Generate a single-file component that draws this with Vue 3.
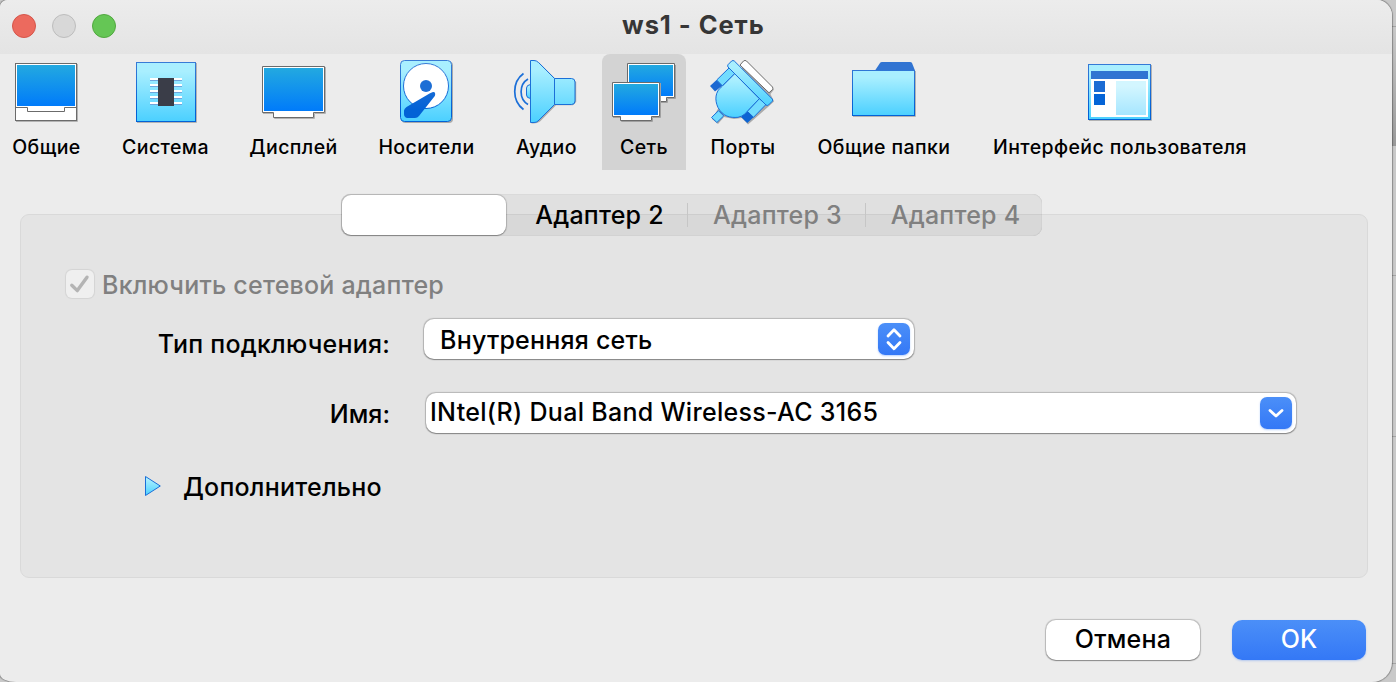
<script setup>
import { ref } from 'vue'

const tools = [
  { id: 'general', label: 'Общие', left: 10, size: 73 },
  { id: 'system', label: 'Система', left: 129, size: 73 },
  { id: 'display', label: 'Дисплей', left: 257, size: 73 },
  { id: 'storage', label: 'Носители', left: 390, size: 73 },
  { id: 'audio', label: 'Аудио', left: 510, size: 73 },
  { id: 'network', label: 'Сеть', left: 607, size: 74 },
  { id: 'ports', label: 'Порты', left: 706, size: 74 },
  { id: 'folders', label: 'Общие папки', left: 847, size: 74 },
  { id: 'interface', label: 'Интерфейс пользователя', left: 1083, size: 74 },
]
const active = ref('network')
const tabs = [
  { label: 'Адаптер 2', off: false },
  { label: 'Адаптер 3', off: true },
  { label: 'Адаптер 4', off: true },
]
</script>

<template>
  <div class="desktop">
    <svg class="defs" width="0" height="0">
      <defs>
        <linearGradient id="screen" x1="0" y1="0" x2="0" y2="1">
          <stop offset="0" stop-color="#23a9e0" /><stop offset="1" stop-color="#007bfa" />
        </linearGradient>
        <linearGradient id="sky" x1="0" y1="0" x2="0" y2="1">
          <stop offset="0.15" stop-color="#a9efff" /><stop offset="1" stop-color="#4bd0ff" />
        </linearGradient>
        <linearGradient id="pane" x1="0" y1="0" x2="0" y2="1">
          <stop offset="0.15" stop-color="#d3f6ff" /><stop offset="1" stop-color="#a6e6ff" />
        </linearGradient>
        <linearGradient id="deep" x1="0" y1="60" x2="0" y2="122" gradientUnits="userSpaceOnUse">
          <stop offset="0" stop-color="#3a7cd6" /><stop offset="0.8" stop-color="#0262d6" />
        </linearGradient>
      </defs>
    </svg>
    <div class="window">
      <header class="titlebar">
        <i class="light light--close"></i><i class="light light--min"></i><i class="light light--max"></i>
        <h1 class="title">ws1 - Сеть</h1>
      </header>

      <nav class="toolbar">
        <button v-for="tool in tools" :key="tool.id" class="tool" :class="['tool--' + tool.id, { 'tool--active': tool.id === active }]" @click="active = tool.id">
          <svg class="tool-icon" :width="tool.size" height="68" :viewBox="`${tool.left} 58 ${tool.size} 68`">
            <template v-if="tool.id === 'general'">
              <path d="M16 121.5H77.5V64" fill="none" stroke="#b3b3b3" />
              <rect x="15.5" y="63.5" width="61" height="57" fill="#fff" stroke="#6b6b6b" />
              <rect x="17" y="65" width="58" height="41" fill="url(#screen)" />
              <path d="M15.5 107.5H27.5V111.5H64.5V107.5H76" fill="none" stroke="#6b6b6b" />
            </template>
            <template v-else-if="tool.id === 'system'">
              <path d="M137 122.5H196.5V63" fill="none" stroke="#b3b3b3" />
              <rect x="136.5" y="62.5" width="59" height="59" fill="url(#sky)" stroke="url(#deep)" />
              <path d="M150 80.5H182M150 86.5H182M150 92.5H182M150 98.5H182M150 104.5H182" stroke="#6fa5dc" />
              <path d="M150 79H182M150 85H182M150 91H182M150 97H182M150 103H182" stroke="#fff" stroke-width="2" />
              <rect x="158" y="78" width="16" height="28" fill="#3a3d48" />
            </template>
            <template v-else-if="tool.id === 'display'">
              <path d="M263 113.5H274.5V118.5H314.5V113.5H325.5V67" fill="none" stroke="#b3b3b3" />
              <path d="M262.5 66.5H324.5V112.5H313.5V117.5H273.5V112.5H262.5Z" fill="#fff" stroke="#6b6b6b" />
              <rect x="264" y="68" width="59" height="43" fill="url(#screen)" />
            </template>
            <template v-else-if="tool.id === 'storage'">
              <rect x="401.5" y="61.5" width="51.5" height="61.5" rx="4" fill="#aaa" />
              <rect x="400.5" y="60.5" width="51" height="61" rx="4" fill="url(#sky)" stroke="url(#deep)" />
              <circle cx="426" cy="86" r="22.5" fill="#fff" stroke="url(#deep)" />
              <circle cx="426" cy="86" r="6" fill="#1c6ed5" />
              <path d="M433 92C435 91.6 435.8 93.5 434.8 96L419 116Q417.5 118 415 118H407Q404 117 404 114V110.5Q404.3 108.5 406.5 107L430 93.2Z" fill="url(#deep)" />
            </template>
            <template v-else-if="tool.id === 'audio'">
              <path d="M531 62L539 62.5L556 79.3H573L576.2 82V102L573 105.3H556L540 121.5Q537 124 531.5 123.5Z" fill="#aaa" />
              <path d="M530.5 84.5Q526.5 85 526.5 88V95Q526.5 98 530.5 98.5Z" fill="url(#sky)" stroke="#1b6fd8" />
              <path d="M530.5 60.5H534Q536.5 60.5 538.5 62.5L554.5 78.5H571.5Q575 78.5 575 82V101Q575 104.5 571.5 104.5H554.5L538 121Q536.5 122.5 534 122.5H530.5ZM554.5 78.5V104.5" fill="url(#sky)" stroke="#1b6fd8" />
              <path d="M523.5 73.5C511.8 82 511.8 101 523.5 109.5M528 79C518.8 84.5 518.8 99 528 104.5" fill="none" stroke="#1b6fd8" stroke-width="1.7" />
            </template>
            <template v-else-if="tool.id === 'network'">
              <path d="M628 98.5H638V102.5H667.5V98.5H675.5V65" fill="none" stroke="#a0a0a0" />
              <path d="M627.5 63.5H674.5V97.5H666.5V101.5H636.5V97.5H627.5Z" fill="#fff" stroke="#6b6b6b" />
              <rect x="629" y="65" width="44" height="31" fill="url(#screen)" />
              <path d="M613 117.5H621.5V121.5H652.5V117.5H660.5V83" fill="none" stroke="#a0a0a0" />
              <path d="M612.5 82.5H659.5V116.5H651.5V120.5H620.5V116.5H612.5Z" fill="#fff" stroke="#6b6b6b" />
              <rect x="614" y="84" width="44" height="31" fill="url(#screen)" />
            </template>
            <template v-else-if="tool.id === 'ports'">
              <path d="M746 61L774 89.5L770.5 94L774 101.5L768 107L748 124.5L742 118L734 119L724 117L718 124L712 119" fill="#aaa" />
              <path d="M740 65L743.5 61Q745 59.8 746.5 61L772.5 87Q773.3 88.3 772.5 89.5L769 92.8Z" fill="#fff" stroke="#6b6b6b" />
              <path d="M716.5 80L710 86L715 91.5L722.5 85.5Z" fill="#1b68d2" />
              <path d="M729 68L716.7 80L722.3 85.7L734.7 73.7ZM759.3 98.7L766 104.5L753.5 117.3L747.3 111.3ZM718.5 110.7L723.7 115.9L716.9 122.5L711.5 117.5Z" fill="#72dcff" stroke="#1b6fd8" />
              <path d="M747.3 111.3L741 117L747.3 123L753.5 117.3Z" fill="#0c64d3" />
              <path d="M734.7 73.7L722 86.5C715 91.5 714.5 100 718 107.5C723 116.5 730 118 738 117.3C743 116.5 746.5 112.5 748 110.5L759.3 98.7Z" fill="url(#sky)" stroke="#1b6fd8" />
              <path d="M731.6 61L728 64.7Q727.3 66 728 67L766 105Q767.3 106 768.5 105L772.3 101.2Q773.2 100 772.3 99L734.3 61Q733 60 731.6 61Z" fill="url(#sky)" stroke="#1b6fd8" />
            </template>
            <template v-else-if="tool.id === 'folders'">
              <path d="M853 116.5H915.5V71" fill="none" stroke="#b3b3b3" />
              <path d="M875 70.5L880 63Q880.5 62 882 62H910Q911.5 62 912 63L915 70.5Z" fill="#3174d2" />
              <rect x="852.5" y="70.5" width="62" height="45" fill="url(#sky)" stroke="url(#deep)" />
            </template>
            <template v-else>
              <path d="M1089 120.5H1151.5V65" fill="none" stroke="#b3b3b3" />
              <rect x="1088.5" y="64.5" width="62" height="55" fill="url(#sky)" stroke="url(#deep)" />
              <rect x="1091" y="71" width="57" height="8" fill="#3074d2" />
              <rect x="1091" y="79" width="57" height="38" fill="#fff" />
              <rect x="1094" y="81" width="11" height="11" fill="#1b6cd4" />
              <rect x="1094" y="94" width="11" height="11" fill="#0464d7" />
              <rect x="1116" y="81" width="30" height="34" fill="url(#pane)" />
            </template>
          </svg>
          <span class="tool-label">{{ tool.label }}</span>
        </button>
      </nav>

      <main class="panel">
        <div class="tabs">
          <span class="tab tab--selected"></span>
          <span v-for="tab in tabs" :key="tab.label" class="tab" :class="{ 'tab--off': tab.off }">{{ tab.label }}</span>
        </div>

        <label class="enable">
          <span class="checkbox">
            <svg width="28" height="28" viewBox="0 0 28 28"><path d="M5.8 15.2L11.3 20.6L21 7.2" fill="none" stroke="#b4b4b4" stroke-width="3.4" stroke-linecap="round" stroke-linejoin="round" /></svg>
          </span>
          <span class="enable-text">Включить сетевой адаптер</span>
        </label>

        <div class="row row--type">
          <span class="caption">Тип подключения:</span>
          <div class="select">
            <span class="select-text">Внутренняя сеть</span>
            <span class="knob">
              <svg width="32" height="32" viewBox="0 0 32 32"><path d="M10 13L16 6.8L22 13M10 19.5L16 25.7L22 19.5" fill="none" stroke="#fff" stroke-width="2.8" stroke-linecap="round" stroke-linejoin="round" /></svg>
            </span>
          </div>
        </div>

        <div class="row row--name">
          <span class="caption">Имя:</span>
          <div class="combo">
            <span class="combo-text">INtel(R) Dual Band Wireless-AC 3165</span>
            <span class="knob">
              <svg width="32" height="32" viewBox="0 0 32 32"><path d="M10 13.5L16 19L22 13.5" fill="none" stroke="#fff" stroke-width="2.8" stroke-linecap="round" stroke-linejoin="round" /></svg>
            </span>
          </div>
        </div>

        <div class="more">
          <svg width="18" height="22" viewBox="144 475 18 22"><path d="M145.5 476.5L160.3 486L145.500 495.500Z" fill="url(#sky)" stroke="#1b6fd8" stroke-linejoin="round" /></svg>
          <span class="more-text">Дополнительно</span>
        </div>
      </main>

      <footer class="footer">
        <button class="btn btn--cancel">Отмена</button>
        <button class="btn btn--ok">OK</button>
      </footer>
    </div>
  </div>
</template>

<style>
html, body { margin: 0; overflow: hidden; background: #c9c9c9; }
</style>

<style scoped>
.desktop {
  box-sizing: border-box;
  width: 1396px;
  height: 682px;
  font-family: Inter, "Liberation Sans", sans-serif;
  font-size: 25px;
  font-weight: 450;
  letter-spacing: 0.22px;
  color: #000;
  background:
    linear-gradient(#a5a5a5, #a5a5a5) right 26px / 8px 1px no-repeat,
    linear-gradient(#a5a5a5, #a5a5a5) right 275px / 8px 1px no-repeat,
    linear-gradient(#a5a5a5, #a5a5a5) right 436px / 8px 1px no-repeat,
    linear-gradient(#a5a5a5, #a5a5a5) right 663px / 8px 1px no-repeat,
    linear-gradient(#c9c9c9, #999) right 27px / 8px 119px no-repeat,
    #c9c9c9;
}
.defs { position: absolute; }
.window {
  width: 1392px;
  height: 682px;
  background: #ececec;
  border-radius: 8px 15px 20px 16px / 7px 16px 20px 8px;
  box-shadow: 0 0 1px 1px rgba(0, 0, 0, 0.3);
  overflow: hidden;
}
.titlebar {
  display: flex;
  gap: 16px;
  box-sizing: border-box;
  height: 54px;
  padding: 14px 0 0 12px;
  background: linear-gradient(#ececec, #e4e4e4);
}
.light { box-sizing: border-box; width: 24px; height: 24px; border-radius: 50%; border: 1px solid; }
.light--close { background: #ec6a5e; border-color: #d5554a; }
.light--min { background: #d8d8d8; border-color: #bdbdbd; }
.light--max { background: #65c655; border-color: #51a83f; }
.title { margin: -4px 0 0 490px; font-size: 25.5px; line-height: 30px; font-weight: 700; letter-spacing: 0.95px; color: #363636; white-space: nowrap; }
.toolbar { display: flex; height: 116px; }
.tool {
  display: flex;
  flex-direction: column;
  align-items: center;
  flex: none;
  padding: 4px 0 0;
  border: 0;
  background: none;
  font: inherit;
  color: #000;
}
.tool-icon { flex: none; display: block; }
.tool-label { margin-top: 9px; font-size: 19.5px; line-height: 24px; font-weight: 540; letter-spacing: 0.4px; white-space: nowrap; }
.tool--general { width: 93px; }
.tool--system { width: 123px; margin-left: 11px; }
.tool--display { width: 127px; margin-left: 3px; }
.tool--storage { width: 133px; margin-left: 3px; }
.tool--audio { width: 101px; margin-left: 3px; }
.tool--network { width: 84px; margin-left: 5px; }
.tool--ports { width: 104px; margin-left: 5px; }
.tool--folders { width: 174px; margin-left: 2px; }
.tool--interface { width: 292px; margin-left: 3px; }
.tool--active { background: #d3d3d3; border-radius: 8px 8px 0 0; }
.panel {
  box-sizing: border-box;
  width: 1348px;
  height: 364px;
  margin: 44px 0 0 20px;
  border: 1px solid #d9d9d9;
  border-radius: 9px;
  background: #e4e4e4;
}
.tabs {
  display: flex;
  align-items: center;
  box-sizing: border-box;
  width: 701px;
  height: 42px;
  margin: -21px 0 0 320px;
  border-radius: 9px;
  background: rgba(0, 0, 0, 0.05);
  box-shadow: inset 0 0 1px rgba(0, 0, 0, 0.25);
}
.tab { display: flex; justify-content: center; box-sizing: border-box; width: 178px; flex: none; line-height: 24px; white-space: nowrap; }
.tab + .tab { width: 179px; padding-left: 4px; }
.tab + .tab + .tab { width: 178px; padding-left: 2px; border-left: 1px solid #c6c6c6; }
.tab.tab--selected { width: 164px; height: 40px; margin: 0 2px 0 1px; border-radius: 9px; background: #fff; box-shadow: 0 0 1px 1px rgba(0, 0, 0, 0.18), 0 1px 1px rgba(0, 0, 0, 0.25); }
.tab--off { color: #808080; }
.enable { display: flex; align-items: center; height: 30px; margin: 33px 0 0 45px; color: #808080; }
.checkbox { width: 28px; height: 28px; border-radius: 6px; background: #efefef; box-shadow: 0 0 1px 1px rgba(0, 0, 0, 0.07); }
.checkbox svg { display: block; }
.enable-text { margin: 2px 0 0 8px; white-space: nowrap; }
.row { display: flex; }
.row--type { margin-top: 20px; }
.row--name { margin-top: 34px; }
.caption { box-sizing: border-box; height: 40px; width: 369px; line-height: 30px; padding-top: 10px; text-align: right; white-space: nowrap; }
.row--name .caption { padding-top: 6px; letter-spacing: 0; }
.select, .combo { display: flex; justify-content: space-between; box-sizing: border-box; height: 40px; border-radius: 10px; background: #fff; box-shadow: 0 0 1px 0.5px rgba(0, 0, 0, 0.2), 0 1px 1px rgba(0, 0, 0, 0.28); }
.select { width: 490px; margin-left: 34px; padding: 4px 4px 0 16px; }
.combo { width: 870px; margin-left: 36px; padding: 4px 4px 0 4px; }
.select-text { line-height: 34px; white-space: nowrap; }
.combo-text { line-height: 31px; letter-spacing: 0.3px; white-space: nowrap; }
.knob { width: 32px; height: 32px; border-radius: 7px; background: linear-gradient(#4b8ff8, #3478f6); box-shadow: 0 1px 2px rgba(52, 120, 246, 0.35); }
.knob svg { display: block; }
.more { display: flex; align-items: center; height: 30px; margin: 38px 0 0 123px; }
.more-text { margin: 2px 0 0 21px; }
.footer { display: flex; justify-content: flex-end; gap: 32px; margin: 42px 26px 0 0; }
.btn { box-sizing: border-box; height: 40px; padding: 0 0 2px; border: 0; border-radius: 10px; font: inherit; letter-spacing: 0.25px; line-height: 36px; }
.btn--cancel { width: 154px; background: #fff; color: #000; box-shadow: 0 0 1px 0.5px rgba(0, 0, 0, 0.2), 0 1px 1px rgba(0, 0, 0, 0.28); }
.btn--ok { width: 134px; background: linear-gradient(#4b8ff8, #3478f6); color: #fff; letter-spacing: 0; box-shadow: 0 1px 2px rgba(52, 120, 246, 0.3); }
</style>
